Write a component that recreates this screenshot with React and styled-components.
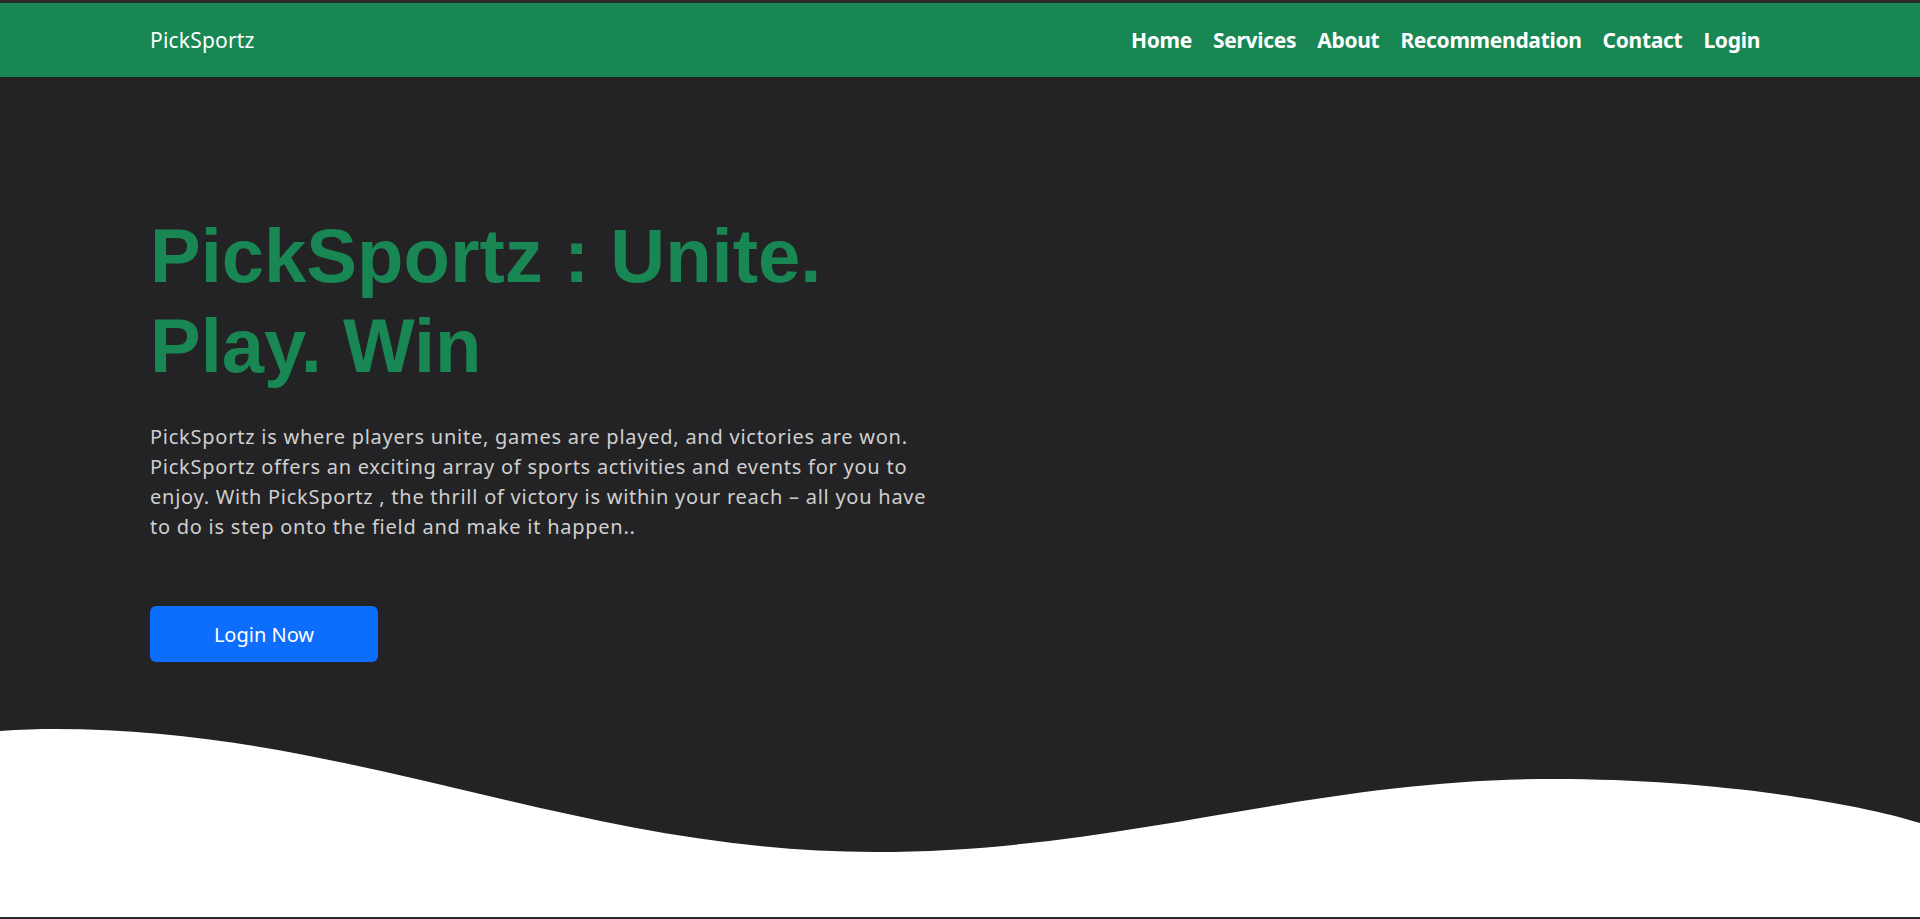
import React from "react";
import styled, { createGlobalStyle } from "styled-components";

const GlobalStyle = createGlobalStyle`
  html, body {
    margin: 0;
    padding: 0;
    background: #ffffff;
  }
  body {
    font-family: "Noto Sans", "Liberation Sans", sans-serif;
    border-top: 3px solid #2b2b2d;
    border-bottom: 2px solid #2b2b2d;
  }
  * {
    box-sizing: border-box;
  }
`;

const NavBar = styled.nav`
  height: 74px;
  background-color: #198754;
  display: flex;
  align-items: center;
  justify-content: space-between;
  padding: 0 160px 0 150px;
`;

const Brand = styled.a`
  color: #ffffff;
  font-size: 21px;
  font-weight: 400;
  letter-spacing: 0.2px;
  text-decoration: none;
`;

const NavLinks = styled.ul`
  display: flex;
  gap: 21px;
  list-style: none;
  margin: 0;
  padding: 0;
`;

const NavLink = styled.a`
  color: #ffffff;
  font-size: 21px;
  font-weight: 700;
  letter-spacing: -0.3px;
  text-decoration: none;
  cursor: pointer;
`;

const Hero = styled.section`
  background-color: #232325;
  display: flex;
  flex-direction: column;
  height: 840px;
`;

const Content = styled.div`
  padding: 134px 0 0 150px;
  flex: 1;
`;

const Title = styled.h1`
  font-family: "Liberation Sans", Arial, sans-serif;
  font-size: 76px;
  line-height: 90px;
  font-weight: 700;
  color: #198754;
  margin: 0 0 31px;
  max-width: 700px;
`;

const Text = styled.p`
  font-size: 20px;
  line-height: 30px;
  letter-spacing: 0.75px;
  color: #cfcfcf;
  margin: 0 0 64px;
  width: 785px;
`;

const LoginButton = styled.button`
  width: 228px;
  height: 56px;
  border: none;
  border-radius: 6px;
  background-color: #0d6efd;
  color: #ffffff;
  font-family: "Noto Sans", "Liberation Sans", sans-serif;
  font-size: 20px;
  cursor: pointer;
`;

const Wave = styled.svg`
  display: block;
  width: 100%;
  height: 188px;
`;

const links = ["Home", "Services", "About", "Recommendation", "Contact", "Login"];

export default function App() {
  return (
    <>
      <GlobalStyle />
      <NavBar>
        <Brand>PickSportz</Brand>
        <NavLinks>
          {links.map((l) => (
            <li key={l}>
              <NavLink>{l}</NavLink>
            </li>
          ))}
        </NavLinks>
      </NavBar>
      <Hero>
        <Content>
          <Title>PickSportz : Unite. Play. Win</Title>
          <Text>
            PickSportz is where players unite, games are played, and victories are won.
            PickSportz offers an exciting array of sports activities and events for you to
            enjoy. With PickSportz , the thrill of victory is within your reach – all you have
            to do is step onto the field and make it happen..
          </Text>
          <LoginButton>Login Now</LoginButton>
        </Content>
        <Wave viewBox="0 0 1920 188" preserveAspectRatio="none">
          <path
            fill="#ffffff"
            d="M0,2 C20,0.5 40,0 55,0 C355,0 575,123 875,123 C1125,123 1305,50 1555,50 C1705,50 1850,72 1920,94 L1920,188 L0,188 Z"
          />
        </Wave>
      </Hero>
    </>
  );
}
